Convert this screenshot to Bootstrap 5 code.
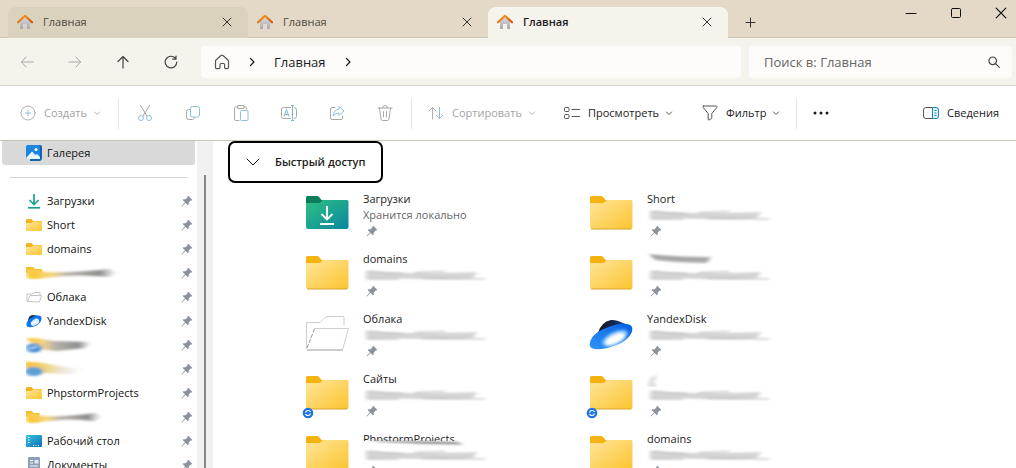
<!DOCTYPE html>
<html lang="ru">
<head>
<meta charset="utf-8">
<meta name="viewport" content="width=device-width, initial-scale=1">
<title>Главная</title>
<link href="https://cdn.jsdelivr.net/npm/bootstrap@5.3.0/dist/css/bootstrap.min.css" rel="stylesheet">
<style>
  body { font: 11px/16px "Open Sans", "Noto Sans", sans-serif; color: #1b1b1b; background: #fff; }
  button { border: 0; background: none; padding: 0; color: inherit; font: inherit; }
  svg { display: block; flex: none; }
  a { color: inherit; text-decoration: none; }
  .line { fill: none; stroke: currentColor; stroke-width: 1; stroke-linecap: round; stroke-linejoin: round; }
  .firm { stroke-width: 1.200; }

  .titlebar { background: #e3d9c6; border-bottom: 1px solid #d2c9b5; height: 38px; padding: 7px 0 0 8px; }
  .app-tab { width: 240px; height: 31px; padding: 0 13px 0 9px; border-radius: 8px 8px 0 0; color: #4f4a40; }
  .app-tab.hovered { background: #dbd2bd; }
  .app-tab.current { background: #f6f3ed; color: #1b1b1b; font-weight: 600; }
  .app-tab .tab-name { margin-left: 10px; }
  .tab-x, .plus { width: 16px; height: 16px; color: #333; }
  .plus { margin-left: 14px; }
  .win-btn { width: 45px; height: 28px; color: #111; }
  .win-set { margin: -8px -7px 0 0; }

  .addressbar { background: #f6f3ec; height: 48px; padding: 0 4px 0 3px; border-bottom: 1px solid #d9d5ca; }
  .square { width: 48px; height: 32px; color: #444; }
  .square:disabled { color: #aaa8a3; }
  .field { background: #fdfcfa; border-radius: 4px; height: 32px; font-size: 13px; }
  .path-box { margin-left: 6px; margin-right: 8px; padding-left: 13px; gap: 18px; }
  .search-box { width: 263px; padding: 0 12px 0 15px; color: #444; }
  .search-box input { border: 0; outline: 0; background: none; color: #555; min-width: 0; padding: 0; }
  .search-box input::placeholder { color: #666; opacity: 1; }
  .home-mark { color: #555; }

  .toolbar { height: 55px; padding: 0 17px 0 12px; border-bottom: 1px solid #c8c5ba; }
  .tool { height: 32px; padding-left: 8px; white-space: nowrap; }
  .tool:disabled { color: #a3a3a3; }
  .tool svg { color: #555; }
  .tool:disabled svg { color: #b0b0b0; }
  .tool svg + span { margin-left: 8px; }
  .tool span + svg { margin-left: 6px; }
  .rule { width: 1px; height: 31px; background: #e6e6e6; }
  .w-new { width: 106px; } .w-sort { width: 136px; } .w-view { width: 138px; } .w-filter { width: 102px; }
  .icon-set { margin: 0 2px; }

  .side { width: 195px; padding-left: 2px; flex: none; overflow: hidden; }
  .side-row { height: 24px; padding: 0 2px 0 24px; color: #111; }
  .side-row .side-name { margin-left: 5px; }
  .side-row.chosen { background: #d9d9d9; border-radius: 0 0 3px 3px; }
  .side-rule { height: 1px; margin: 12px 8px 11px; background: #d4d4d4; }
  .track { width: 16px; margin-left: 2px; background: #f1f1f1; padding: 34px 0 0 7px; flex: none; }
  .thumb { width: 2px; height: 100%; background: #858585; }

  .content { overflow: hidden; padding-left: 15px; }
  .group-btn { border: 2px solid #000; border-radius: 7px; width: 155px; height: 42px; padding-left: 16px; font-weight: 600; }
  .group-btn span { margin-left: 15px; }
  .tiles { display: grid; grid-template-columns: repeat(auto-fill, 284px); grid-auto-rows: 60px; padding: 8px 0 0 73px; }
  .tile { height: 60px; color: #222; }
  .tile-info { margin-left: 14px; }
  .tile-info .line-box { height: 16px; display: block; white-space: nowrap; }
  .tile-info .where { color: #666; }
  .tile-info .pin { margin: 2px 0 0 3px; }
  .sync-mark { left: -3px; bottom: -8px; }
</style>
<script src="https://cdn.jsdelivr.net/npm/bootstrap@5.3.0/dist/js/bootstrap.bundle.min.js"></script>
</head>
<body class="vh-100 d-flex flex-column overflow-hidden">

<svg width="0" height="0" class="position-absolute" aria-hidden="true">
  <defs>
    <linearGradient id="gFolder" x1="0" y1="0" x2="1" y2="1"><stop offset="0" stop-color="#ffe59a"/><stop offset="1" stop-color="#fbc530"/></linearGradient>
    <linearGradient id="gDown" x1="0" y1="0" x2="1" y2="1"><stop offset="0" stop-color="#2fc183"/><stop offset="1" stop-color="#0a86a0"/></linearGradient>
    <linearGradient id="gRoof" x1="0" y1="0" x2="1" y2="1"><stop offset="0" stop-color="#f9a01b"/><stop offset="1" stop-color="#d4510c"/></linearGradient>
    <linearGradient id="gWall" x1="0" y1="0" x2="0" y2="1"><stop offset="0" stop-color="#d8d8dc"/><stop offset="1" stop-color="#a9a9b6"/></linearGradient>
    <linearGradient id="gDesk" x1="0" y1="0" x2="1" y2="1"><stop offset="0" stop-color="#36c5e0"/><stop offset="1" stop-color="#0a6fb5"/></linearGradient>
    <linearGradient id="gDome" x1="0" y1="0" x2="1" y2="0"><stop offset="0" stop-color="#17181f"/><stop offset=".5" stop-color="#14254e"/><stop offset="1" stop-color="#0d5fd0"/></linearGradient>
    <linearGradient id="gRim" x1="0" y1="1" x2="1" y2="0"><stop offset="0" stop-color="#2f93f5"/><stop offset="1" stop-color="#0660e2"/></linearGradient>
    <linearGradient id="gSmear" x1="0" y1="0" x2="1" y2="0"><stop offset="0" stop-color="#fbc530"/><stop offset=".25" stop-color="#f4d682"/><stop offset=".42" stop-color="#b9b5aa"/><stop offset=".8" stop-color="#8e8e90"/><stop offset="1" stop-color="#bbb" stop-opacity="0"/></linearGradient>
    <linearGradient id="gSmearFaint" x1="0" y1="0" x2="1" y2="0"><stop offset="0" stop-color="#f7bd28"/><stop offset=".35" stop-color="#f0d68a"/><stop offset=".7" stop-color="#ddd" stop-opacity=".4"/><stop offset="1" stop-color="#fff" stop-opacity="0"/></linearGradient>
    <filter id="soft" x="-10%" y="-60%" width="120%" height="220%"><feGaussianBlur stdDeviation="2 .8"/></filter>
    <filter id="glow" x="-30%" y="-30%" width="160%" height="160%"><feGaussianBlur stdDeviation="1.5"/></filter>
  </defs>
  <symbol id="house" viewBox="0 0 16 16"><path d="M3 7.500 8 3l5 4.500V14.500q0 .5-.5.5H10v-5H6v5H3.500q-.5 0-.5-.5z" fill="url(#gWall)"/><path d="M1 8.300 8 1.800l7 6.500" fill="none" stroke="url(#gRoof)" stroke-width="2.200" stroke-linejoin="round" stroke-linecap="round"/></symbol>
  <symbol id="cross" viewBox="0 0 10 10"><path class="line" d="M1 1l8 8M9 1l-8 8"/></symbol>
  <symbol id="caret" viewBox="0 0 8 8"><path class="line" d="M1.500 3 4 5.500 6.500 3"/></symbol>
  <symbol id="right" viewBox="0 0 8 10"><path class="line firm" d="M2.500 1.500 6 5 2.500 8.500"/></symbol>
  <symbol id="pin" viewBox="0 0 12 12"><path d="M7.200.8 11.200 4.800 10.300 5.700 9.700 5.500 7.800 7.400 7.700 9.500 6.900 10.300 4.600 8 1.200 11.300.6 11.400.7 10.800 4 7.400 1.700 5.100 2.500 4.300 4.600 4.200 6.500 2.300 6.300 1.700z" fill="#8c939b"/></symbol>
  <symbol id="folderS" viewBox="0 0 16 14"><path d="M0 2q0-1 1-1h4.500l1.700 2H15q1 0 1 1v8q0 1-1 1H1q-1 0-1-1z" fill="#f5b31a"/><path d="M0 5h5.500l1.700-1.500H15q1 0 1 1V12q0 1-1 1H1q-1 0-1-1z" fill="url(#gFolder)"/></symbol>
  <symbol id="openS" viewBox="0 0 16 12"><path d="M1 10.500V3h5l1.500-1.500H14V4M1.500 10.500 4 4.500h11.500l-2 6.500z" fill="none" stroke="#c4c4c4"/></symbol>
  <symbol id="folderL" viewBox="0 0 44 36"><path d="M1 2.500Q1 1 2.500 1H12q1 0 2 1l2.500 3H41q2 0 2 2v5H1z" fill="#f5b312"/><path d="M1 8h13q1 0 2-1l1.500-2H42q1.500 0 1.500 1.500V32q0 2-2 2H3q-2 0-2-2z" fill="url(#gFolder)"/><path d="M2 34h40.500" stroke="#d9a32c"/></symbol>
  <symbol id="downL" viewBox="0 0 44 36"><path d="M1 2.500Q1 1 2.500 1H12q1 0 2 1l2.500 3H41q2 0 2 2v5H1z" fill="#0c7d5c"/><path d="M1 8h13q1 0 2-1l1.500-2H42q1.500 0 1.500 1.500V32q0 2-2 2H3q-2 0-2-2z" fill="url(#gDown)"/><path d="M22 11v13M16.500 19 22 24.500l5.500-5.500M15 29h14" fill="none" stroke="#fff" stroke-width="1.800"/></symbol>
  <symbol id="openL" viewBox="0 0 44 36"><path d="M1.500 34V7.500H15L20 2.500Q21 1.500 22 1.500h16q1 0 1 1v8M9 13.500h34.500L37.500 34.500" fill="none" stroke="#c2c2c2" stroke-width=".8"/><path d="M2 35h36" stroke="#999"/><path d="M2 33 9.500 14" stroke="#999" fill="none" stroke-dasharray="4 1.500"/></symbol>
  <symbol id="disk" viewBox="0 0 44 32"><path d="M9 14Q12 3 22 1q5-.5 12 3l7 3-16 12z" fill="url(#gDome)"/><path d="M.8 27C0 20 6 13 17 9 28 4 41 3 43 8c2 6-5 14-16 18C15 31 3 32 .8 27z" fill="url(#gRim)"/><ellipse cx="26" cy="19" rx="14" ry="6" transform="rotate(-26 26 19)" fill="#7cc0ff" filter="url(#glow)"/><ellipse cx="26" cy="20" rx="11" ry="4.500" transform="rotate(-26 26 20)" fill="#fff" filter="url(#glow)"/></symbol>
  <symbol id="diskS" viewBox="0 0 16 14"><path d="M2 8Q2 1 7 1q4 0 7 2L7 9z" fill="#20304a"/><path d="M.5 11C0 7 5 3 10 1.800 14 .8 16 2.500 15.500 5 15 9 10 13 5.500 13 2.500 13.500.8 13 .5 11z" fill="#0c76ee"/><ellipse cx="9" cy="8.300" rx="4.600" ry="2.800" transform="rotate(-35 9 8.300)" fill="#e5f3ff"/></symbol>
  <symbol id="blurWide" viewBox="0 0 130 16"><g filter="url(#soft)"><path d="M3 4Q30 6 60 6T114 5L110 11Q90 13 60 12T3 12z" fill="#d4d4d4"/><path d="M5 4 24 6 40 6.500M52 5.500 82 4.500M4 12H36M60 11.500 122 12" fill="none" stroke="#a5a5a5" stroke-width=".8"/></g></symbol>
  <symbol id="blurName" viewBox="0 0 80 16"><g filter="url(#soft)"><path d="M2 3Q30 6 64 6L60 12Q30 12 8 9z" fill="#adadad"/><path d="M4 5Q30 9 58 8.500" fill="none" stroke="#999"/></g></symbol>
  <symbol id="smearRow" viewBox="0 0 96 20"><path d="M0 4h7l2 2h7v4H0z" fill="#f5bb2c"/><path d="M0 7h15l2 8H0z" fill="#fbd25a" filter="url(#soft)"/><path d="M4 8Q40 11 84 6L92 10 82 14Q50 11 30 14L4 16z" fill="url(#gSmear)" filter="url(#soft)"/></symbol>
  <symbol id="smearBlue" viewBox="0 0 96 20"><g filter="url(#soft)"><path d="M0 3h11l16 3 39 1-6 6-30 3-18-2z" fill="url(#gSmear)"/><ellipse cx="8" cy="13" rx="8" ry="4.500" fill="#3b8ad6"/><path d="M3 14 12 11" stroke="#d5ebff" stroke-width="1.500"/></g></symbol>
  <symbol id="smearFaint" viewBox="0 0 96 20"><g filter="url(#soft)"><path d="M-2 3h13l36 6 20 1-21 5-30-1-16-4z" fill="url(#gSmearFaint)"/><ellipse cx="8" cy="12.500" rx="9" ry="4.500" fill="#5b9fd6"/></g></symbol>
  <symbol id="sync" viewBox="0 0 12 12"><circle cx="6" cy="6" r="5.300" fill="#1f74e0"/><path d="M3.500 5.500Q4 3.500 6 3.500t2.500 1.500M8.500 6.500Q8 8.500 6 8.500T3.500 7" fill="none" stroke="#fff" stroke-width="1.100"/></symbol>
</svg>

<header class="titlebar flex-shrink-0 d-flex align-items-center">
  <div class="app-tab hovered d-flex align-items-center"><svg width="16" height="16"><use href="#house"/></svg><span class="tab-name me-auto">Главная</span><button class="tab-x d-flex align-items-center justify-content-center" aria-label="Закрыть вкладку"><svg width="10" height="10"><use href="#cross"/></svg></button></div>
  <div class="app-tab d-flex align-items-center"><svg width="16" height="16"><use href="#house"/></svg><span class="tab-name me-auto">Главная</span><button class="tab-x d-flex align-items-center justify-content-center" aria-label="Закрыть вкладку"><svg width="10" height="10"><use href="#cross"/></svg></button></div>
  <div class="app-tab current d-flex align-items-center"><svg width="16" height="16"><use href="#house"/></svg><span class="tab-name me-auto">Главная</span><button class="tab-x d-flex align-items-center justify-content-center" aria-label="Закрыть вкладку"><svg width="10" height="10"><use href="#cross"/></svg></button></div>
  <button class="plus" aria-label="Новая вкладка"><svg width="16" height="16"><path class="line" d="M8.500 4v9M4 8.500h9"/></svg></button>
  <div class="win-set d-flex ms-auto align-self-start">
    <button class="win-btn d-flex align-items-center justify-content-center" aria-label="Свернуть"><svg width="12" height="12"><path class="line" d="M1 6.500h10"/></svg></button>
    <button class="win-btn d-flex align-items-center justify-content-center" aria-label="Развернуть"><svg width="12" height="12"><rect class="line" x="1.500" y="1.500" width="9" height="9" rx="1"/></svg></button>
    <button class="win-btn d-flex align-items-center justify-content-center" aria-label="Закрыть"><svg width="12" height="12"><use href="#cross"/></svg></button>
  </div>
</header>

<nav class="addressbar flex-shrink-0 d-flex align-items-center">
  <button class="square d-flex align-items-center justify-content-center" disabled aria-label="Назад"><svg width="14" height="14"><path class="line" d="M13 7H1.500M6 2 1.500 7 6 12"/></svg></button>
  <button class="square d-flex align-items-center justify-content-center" disabled aria-label="Вперёд"><svg width="14" height="14"><path class="line" d="M1 7h11.500M8 2l4.500 5L8 12"/></svg></button>
  <button class="square d-flex align-items-center justify-content-center" aria-label="Вверх"><svg width="14" height="14"><path class="line firm" d="M7 13V1.500M2 6.500l5-5 5 5"/></svg></button>
  <button class="square d-flex align-items-center justify-content-center" aria-label="Обновить"><svg width="14" height="14"><path class="line firm" d="M12.800 7A5.800 5.800 0 1 1 11.500 3.400M12 1v3.200H8.800"/></svg></button>
  <div class="field path-box flex-grow-1 d-flex align-items-center">
    <svg class="home-mark" width="16" height="16"><path class="line firm" d="M1.500 7.200Q1.500 6.500 2 6L7 1.500q1-.8 2 0L14 6q.5.500.500 1.200V13.500q0 1.200-1.200 1.200h-1.500q-1.200 0-1.200-1.200V10.500q0-1-1-1H7q-1 0-1 1V13.500q0 1.200-1.200 1.200H2.700q-1.200 0-1.200-1.200z"/></svg>
    <svg width="8" height="10"><use href="#right"/></svg>
    <a href="#">Главная</a>
    <svg width="8" height="10"><use href="#right"/></svg>
  </div>
  <label class="field search-box d-flex align-items-center"><input class="flex-grow-1" type="search" placeholder="Поиск в: Главная" aria-label="Поиск"><svg width="12" height="12"><path class="line firm" d="M8.500 4.800a3.800 3.800 0 1 1-7.600 0 3.800 3.800 0 0 1 7.600 0M7.600 7.600 11.300 11.300"/></svg></label>
</nav>

<div class="toolbar flex-shrink-0 d-flex align-items-center">
  <button class="tool w-new d-flex align-items-center" disabled><svg width="16" height="16"><circle class="line" cx="8" cy="8" r="7"/><path d="M8 5v6M5 8h6" stroke="#8fc0da"/></svg><span>Создать</span><svg width="8" height="8"><use href="#caret"/></svg></button>
  <div class="rule"></div>
  <div class="icon-set d-flex">
  <button class="square d-flex align-items-center justify-content-center" disabled aria-label="Вырезать"><svg width="16" height="18"><path class="line" d="M3.500 1.500 10 12M12.500 1.500 6 12"/><g stroke="#8fc0da" fill="none"><circle cx="4" cy="14" r="2.500"/><circle cx="12" cy="14" r="2.500"/></g></svg></button>
  <button class="square d-flex align-items-center justify-content-center" disabled aria-label="Копировать"><svg width="16" height="16"><path class="line" d="M5 4.500H3.500q-2 0-2 2v6q0 2 2 2h4q1.500 0 2-2"/><rect x="5.500" y="1.500" width="9" height="10.500" rx="2" fill="none" stroke="#8fc0da"/></svg></button>
  <button class="square d-flex align-items-center justify-content-center" disabled aria-label="Вставить"><svg width="16" height="18"><path class="line" d="M5 3H2.500q-1 0-1 1v11q0 1.500 1 1.500H6M11 3h1.500q1 0 1 1v1M5 1.500h6v3H5z"/><rect x="7.500" y="6.500" width="7.500" height="10" rx="1" fill="none" stroke="#8fc0da"/></svg></button>
  <button class="square d-flex align-items-center justify-content-center" disabled aria-label="Переименовать"><svg width="16" height="16"><path class="line" d="M9.500 2.500H2.500q-2 0-2 2v7q0 2 2 2h7M13.500 2.500q2 .2 2 2v7q0 2-2 2"/><path d="M10 .5h3M10 15.500h3M11.500.5v15M3 11.500 5.500 4.500 8 11.500M4 9.500h3.500" fill="none" stroke="#7db4d2"/></svg></button>
  <button class="square d-flex align-items-center justify-content-center" disabled aria-label="Поделиться"><svg width="16" height="16"><path class="line" d="M6 2.500H3q-1.500 0-1.500 1.500v9q0 1.500 1.500 1.500h9q1.500 0 1.500-1.500v-2"/><path d="M10 1.500 15 6l-5 4.500V8Q6 8 4 11 4.500 5 10 4.200z" fill="none" stroke="#8fc0da" stroke-linejoin="round"/></svg></button>
  <button class="square d-flex align-items-center justify-content-center" disabled aria-label="Удалить"><svg width="16" height="18"><path class="line" d="M1 4h14M5.500 4Q5.500 1.500 8 1.500T10.500 4M2.500 4 4 15q.2 1.500 1.500 1.500h5Q11.800 16.500 12 15L13.500 4M6.500 7.500v5.500M9.500 7.500v5.500"/></svg></button>
  </div>
  <div class="rule"></div>
  <button class="tool w-sort ms-2 d-flex align-items-center" disabled><svg width="16" height="16"><path class="line" d="M4.500 14V2.500M1 6l3.500-3.500L8 6"/><path d="M11.500 2v11.500M8 10l3.500 3.500L15 10" fill="none" stroke="#8fc0da"/></svg><span>Сортировать</span><svg width="8" height="8"><use href="#caret"/></svg></button>
  <button class="tool w-view d-flex align-items-center"><svg width="16" height="16"><g class="line"><rect x=".5" y="2.500" width="4.500" height="4" rx="1"/><rect x=".5" y="9.500" width="4.500" height="4" rx="1"/><path d="M8 4.500h7.500M8 11.500h7.500"/></g></svg><span>Просмотреть</span><svg width="8" height="8"><use href="#caret"/></svg></button>
  <button class="tool w-filter d-flex align-items-center"><svg width="16" height="16"><path class="line" d="M1.500 1h13q1 .5.300 1.500L9.800 8.500V13q0 .5-.5.700l-2.300 1.300q-.8.200-.8-.7V8.500L1.200 2.500Q.5 1.500 1.500 1z"/></svg><span>Фильтр</span><svg width="8" height="8"><use href="#caret"/></svg></button>
  <div class="rule"></div>
  <button class="square d-flex align-items-center justify-content-center" aria-label="Дополнительно"><svg width="16" height="4" fill="#1b1b1b"><circle cx="2" cy="2" r="1.500"/><circle cx="8" cy="2" r="1.500"/><circle cx="14" cy="2" r="1.500"/></svg></button>
  <button class="tool ms-auto d-flex align-items-center"><svg width="16" height="16"><path d="M9.500 2.500H3q-2.500 0-2.500 2.500v6q0 2.500 2.500 2.500h6.500" fill="none" stroke="#555"/><path d="M9.500 2.500H13q2.500 0 2.500 2.500v6q0 2.500-2.500 2.500H9.500zM11.500 5.500h2M11.500 8h2M11.500 10.500h2" fill="#e4f4fb" stroke="#1587b8"/></svg><span>Сведения</span></button>
</div>

<main class="d-flex flex-grow-1 overflow-hidden">
  <nav class="side">
    <a href="#" class="side-row chosen d-flex align-items-center"><svg width="16" height="16"><path d="M4 0h10q2 0 2 2v11q0 3-3 3H4z" fill="#1264b0"/><rect width="14" height="14" rx="1.500" fill="#1c86dc"/><path d="M0 13 6 6.500 9.500 10 11 9l3 3v2H1z" fill="#e9f6ff"/><circle cx="10" cy="4.500" r="1.500" fill="#fff"/></svg><span class="side-name">Галерея</span></a>
    <div class="side-rule"></div>
    <a href="#" class="side-row d-flex align-items-center"><svg width="16" height="16"><path d="M8 1v10M3.500 7 8 11.500 12.500 7" fill="none" stroke="#16a58c" stroke-width="1.700"/><path d="M2 14.800h12" stroke="#16a58c" stroke-width="1.700"/></svg><span class="side-name me-auto">Загрузки</span><svg width="12" height="12"><use href="#pin"/></svg></a>
    <a href="#" class="side-row d-flex align-items-center"><svg width="16" height="14"><use href="#folderS"/></svg><span class="side-name me-auto">Short</span><svg width="12" height="12"><use href="#pin"/></svg></a>
    <a href="#" class="side-row d-flex align-items-center"><svg width="16" height="14"><use href="#folderS"/></svg><span class="side-name me-auto">domains</span><svg width="12" height="12"><use href="#pin"/></svg></a>
    <a href="#" class="side-row d-flex align-items-center"><svg width="96" height="20" class="me-auto"><use href="#smearRow"/></svg><svg width="12" height="12"><use href="#pin"/></svg></a>
    <a href="#" class="side-row d-flex align-items-center"><svg width="16" height="12"><use href="#openS"/></svg><span class="side-name me-auto">Облака</span><svg width="12" height="12"><use href="#pin"/></svg></a>
    <a href="#" class="side-row d-flex align-items-center"><svg width="16" height="14"><use href="#diskS"/></svg><span class="side-name me-auto">YandexDisk</span><svg width="12" height="12"><use href="#pin"/></svg></a>
    <a href="#" class="side-row d-flex align-items-center"><svg width="96" height="20" class="me-auto"><use href="#smearBlue"/></svg><svg width="12" height="12"><use href="#pin"/></svg></a>
    <a href="#" class="side-row d-flex align-items-center"><svg width="96" height="20" class="me-auto overflow-visible"><use href="#smearFaint"/></svg><svg width="12" height="12"><use href="#pin"/></svg></a>
    <a href="#" class="side-row d-flex align-items-center"><svg width="16" height="14"><use href="#folderS"/></svg><span class="side-name me-auto">PhpstormProjects</span><svg width="12" height="12"><use href="#pin"/></svg></a>
    <a href="#" class="side-row d-flex align-items-center"><svg width="80" height="20" viewBox="0 0 96 20" preserveAspectRatio="none" class="me-auto"><use href="#smearRow" width="96" height="20"/></svg><svg width="12" height="12"><use href="#pin"/></svg></a>
    <a href="#" class="side-row d-flex align-items-center"><svg width="16" height="14"><rect y="1" width="16" height="12" rx="1" fill="url(#gDesk)"/><path d="M2 3.500h1.500M2 6h1.500M2 8.500h1.500M7 11.500h1M9.500 11.500h1M12 11.500h1" stroke="#fff"/></svg><span class="side-name me-auto">Рабочий стол</span><svg width="12" height="12"><use href="#pin"/></svg></a>
    <a href="#" class="side-row d-flex align-items-center"><svg width="16" height="16"><rect x="2" width="12" height="16" rx="1" fill="#8ba0b6"/><path d="M4 3.500h3M4 6h3M4 9h8M4 11.500h8" stroke="#fff"/><path d="M8.500 3h4v3.500h-4z" fill="#dfe8f2"/></svg><span class="side-name me-auto">Документы</span><svg width="12" height="12"><use href="#pin"/></svg></a>
  </nav>
  <div class="track"><div class="thumb"></div></div>

  <section class="content flex-grow-1">
    <button class="group-btn d-flex align-items-center"><svg width="14" height="10"><path class="line" d="M1 2l6 6 6-6"/></svg><span>Быстрый доступ</span></button>
    <div class="tiles">
      <a href="#" class="tile d-flex align-items-start"><svg width="44" height="36" class="mt-1 ms-1"><use href="#downL"/></svg><span class="tile-info"><span class="line-box">Загрузки</span><span class="line-box where">Хранится локально</span><svg class="pin" width="12" height="12"><use href="#pin"/></svg></span></a>
      <a href="#" class="tile d-flex align-items-start"><svg width="44" height="36" class="mt-1 ms-1"><use href="#folderL"/></svg><span class="tile-info"><span class="line-box">Short</span><svg width="130" height="16"><use href="#blurWide"/></svg><svg class="pin" width="12" height="12"><use href="#pin"/></svg></span></a>
      <a href="#" class="tile d-flex align-items-start"><svg width="44" height="36" class="mt-1 ms-1"><use href="#folderL"/></svg><span class="tile-info"><span class="line-box">domains</span><svg width="130" height="16"><use href="#blurWide"/></svg><svg class="pin" width="12" height="12"><use href="#pin"/></svg></span></a>
      <a href="#" class="tile d-flex align-items-start"><svg width="44" height="36" class="mt-1 ms-1"><use href="#folderL"/></svg><span class="tile-info"><svg width="80" height="16"><use href="#blurName"/></svg><svg width="130" height="16"><use href="#blurWide"/></svg><svg class="pin" width="12" height="12"><use href="#pin"/></svg></span></a>
      <a href="#" class="tile d-flex align-items-start"><svg width="44" height="36" class="mt-1 ms-1"><use href="#openL"/></svg><span class="tile-info"><span class="line-box">Облака</span><svg width="130" height="16"><use href="#blurWide"/></svg><svg class="pin" width="12" height="12"><use href="#pin"/></svg></span></a>
      <a href="#" class="tile d-flex align-items-start"><svg width="44" height="40" class="mt-1 ms-1"><use href="#disk"/></svg><span class="tile-info"><span class="line-box">YandexDisk</span><svg width="130" height="16"><use href="#blurWide"/></svg><svg class="pin" width="12" height="12"><use href="#pin"/></svg></span></a>
      <a href="#" class="tile d-flex align-items-start"><span class="position-relative mt-1 ms-1"><svg width="44" height="36"><use href="#folderL"/></svg><svg width="12" height="12" class="position-absolute sync-mark"><use href="#sync"/></svg></span><span class="tile-info"><span class="line-box">Сайты</span><svg width="130" height="16"><use href="#blurWide"/></svg><svg class="pin" width="12" height="12"><use href="#pin"/></svg></span></a>
      <a href="#" class="tile d-flex align-items-start"><span class="position-relative mt-1 ms-1"><svg width="44" height="36"><use href="#folderL"/></svg><svg width="12" height="12" class="position-absolute sync-mark"><use href="#sync"/></svg></span><span class="tile-info"><svg width="24" height="16"><path d="M1 15 3 8 9 3v5L6 10l4 6z" fill="#dadada" filter="url(#soft)"/></svg><svg width="130" height="16"><use href="#blurWide"/></svg><svg class="pin" width="12" height="12"><use href="#pin"/></svg></span></a>
      <a href="#" class="tile d-flex align-items-start"><svg width="44" height="36" class="mt-1 ms-1"><use href="#folderL"/></svg><span class="tile-info"><span class="line-box position-relative">PhpstormProjects<svg width="110" height="10" class="position-absolute bottom-0 start-0"><path d="M0 4H96L104 8 40 10H0z" fill="#fff"/><path d="M2 3.500Q50 4 94 5L100 7.500Q60 7 20 5z" fill="#888" filter="url(#soft)"/></svg></span><svg width="130" height="16"><use href="#blurWide"/></svg><svg class="pin" width="12" height="12"><use href="#pin"/></svg></span></a>
      <a href="#" class="tile d-flex align-items-start"><svg width="44" height="36" class="mt-1 ms-1"><use href="#folderL"/></svg><span class="tile-info"><span class="line-box">domains</span><svg width="130" height="16"><use href="#blurWide"/></svg><svg class="pin" width="12" height="12"><use href="#pin"/></svg></span></a>
    </div>
  </section>
</main>
</body>
</html>
